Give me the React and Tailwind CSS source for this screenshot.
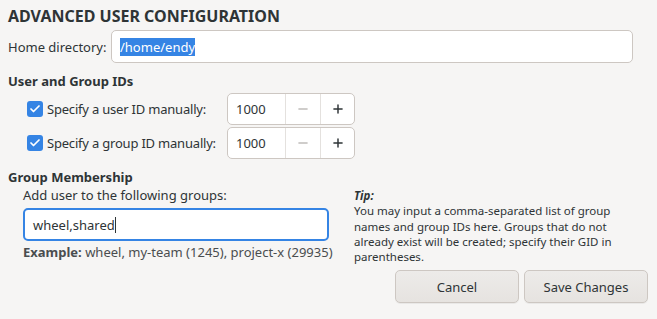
import { Check, Minus, Plus } from 'lucide-react';

function SpinRow({ label }) {
    return (
        <div className="flex items-center h-[32px]">
            <div className="flex items-center w-[200px]">
                <span className="w-[16px] h-[16px] rounded-[3px] bg-[#3584e4] flex items-center justify-center">
                    <Check size={12} strokeWidth={3.5} className="text-white" />
                </span>
                <span className="ml-[4px] tracking-[-0.2px]">{label}</span>
            </div>
            <div className="flex h-[32px] w-[128px] rounded-[5px] border border-[#cdc7c2] bg-white overflow-hidden">
                <div className="w-[57px] flex items-center pl-[8px]">1000</div>
                <div className="w-[35px] flex items-center justify-center border-l border-[#e4e1de] text-[#c0bdba]">
                    <Minus size={14} strokeWidth={2.5} />
                </div>
                <div className="flex-1 flex items-center justify-center border-l border-[#e4e1de] text-[#2e3436]">
                    <Plus size={14} strokeWidth={2.5} />
                </div>
            </div>
        </div>
    );
}

export default function App() {
    return (
        <div className="w-[657px] h-[319px] bg-[#f6f5f4] text-[#2e3436] text-[13px] leading-[16px] font-['Noto_Sans',sans-serif] px-[8px] pt-[6px] overflow-hidden">
            <h1 className="text-[16px] leading-[20px] font-bold">ADVANCED USER CONFIGURATION</h1>

            <div className="flex items-center mt-[4px]">
                <span className="w-[103px]">Home directory:</span>
                <div className="w-[522px] h-[33px] rounded-[5px] border border-[#cdc7c2] bg-white flex items-center pl-[8px]">
                    <span className="bg-[#3584e4] text-white leading-[18px]">/home/endy</span>
                </div>
            </div>

            <h2 className="font-bold mt-[10px]">User and Group IDs</h2>
            <div className="pl-[19px] mt-[4px] flex flex-col gap-[2px]">
                <SpinRow label="Specify a user ID manually:" />
                <SpinRow label="Specify a group ID manually:" />
            </div>

            <h2 className="font-bold mt-[10px]">Group Membership</h2>
            <div className="flex mt-[2px]">
                <div className="pl-[15px] w-[329px]">
                    <div>Add user to the following groups:</div>
                    <div className="mt-[5px] w-[306px] h-[33px] rounded-[5px] border-2 border-[#3584e4] bg-white flex items-center pl-[8px]">
                        wheel,shared<span className="w-px h-[16px] bg-[#2e3436]"></span>
                    </div>
                    <div className="mt-[3px]">
                        <span className="font-bold text-[#4a4d4f]">Example:</span>{' '}
                        <span className="text-[#4a4d4f]">wheel, my-team (1245), project-x (29935)</span>
                    </div>
                </div>
                <div className="ml-[17px] w-[290px] text-[11.5px] leading-[15.3px] pt-[1px]">
                    <div className="font-bold italic">Tip:</div>
                    <div>You may input a comma-separated list of group names and group IDs here. Groups that do not already exist will be created; specify their GID in parentheses.</div>
                </div>
            </div>

            <div className="flex justify-end gap-[5px] mt-[6px] pr-[1px]">
                <button className="w-[124px] h-[33px] rounded-[5px] border border-[#cdc7c2] bg-gradient-to-b from-[#edebe9] to-[#e6e3e0] shadow-[0_1px_0_rgba(0,0,0,0.05)]">Cancel</button>
                <button className="w-[124px] h-[33px] rounded-[5px] border border-[#cdc7c2] bg-gradient-to-b from-[#edebe9] to-[#e6e3e0] shadow-[0_1px_0_rgba(0,0,0,0.05)]">Save Changes</button>
            </div>
        </div>
    );
}
